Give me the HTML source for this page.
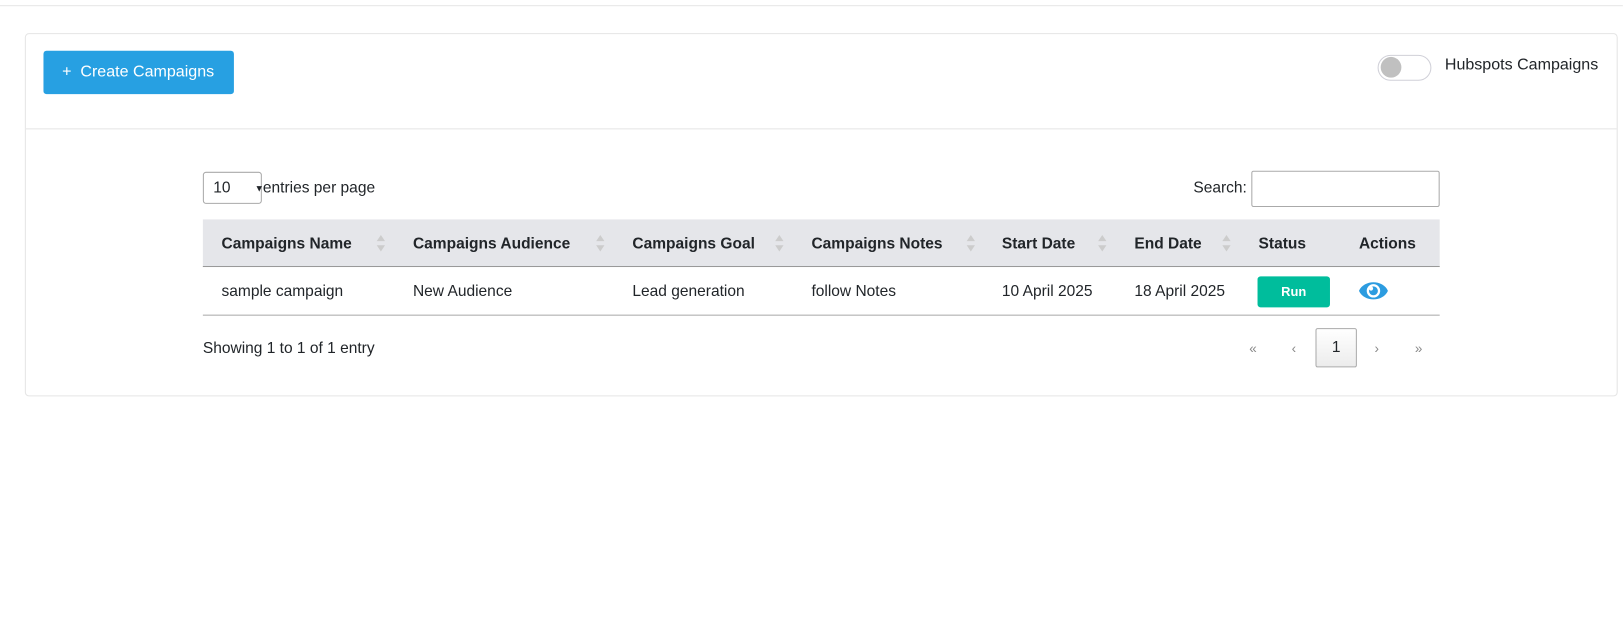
<!DOCTYPE html>
<html><head><style>
body{margin:0;width:1623px;height:622px;background:#fff;font-family:"Liberation Sans",sans-serif;font-size:15px;color:#212529;position:relative;overflow:hidden}
#w{position:absolute;left:0;top:0;width:1568px;height:601px;transform:scale(1.035);transform-origin:0 0}
.a{position:absolute;white-space:nowrap}
.sort{position:absolute;width:0;height:0;border-left:4px solid transparent;border-right:4px solid transparent}
</style></head><body><div id="w">
<div class="a" style="left:0;top:5px;width:1568px;height:1px;background:#e6e6e6"></div>
<div class="a" style="left:24px;top:32px;width:1539px;height:351px;border:1px solid #e5e5e5;border-radius:4px;box-sizing:border-box"></div>
<div class="a" style="left:25px;top:124px;width:1537px;height:1px;background:#e5e5e5"></div>
<div class="a" style="left:42px;top:49px;width:184px;height:42px;background:#27a0e2;border-radius:3px;color:#fff;font-size:15.5px;line-height:42px;text-indent:18px">+&nbsp;&nbsp;Create Campaigns</div>
<div class="a" style="left:1331px;top:53px;width:52px;height:25px;border:1px solid #d0d0d8;border-radius:13px;box-sizing:border-box"></div>
<div class="a" style="left:1334px;top:55px;width:20px;height:20px;border-radius:50%;background:#c0c0c0"></div>
<div class="a" style="left:1396px;top:54px;font-size:15.5px">Hubspots Campaigns</div>
<div class="a" style="left:196px;top:166px;width:57px;height:31px;border:1px solid #aaa;border-radius:3px;box-sizing:border-box;line-height:29px;text-indent:9px">10<span style="position:absolute;left:40px;top:1px;font-size:9px">&#9660;</span></div>
<div class="a" style="left:254px;top:173px">entries per page</div>
<div class="a" style="left:1153px;top:173px">Search:</div>
<div class="a" style="left:1209px;top:165px;width:182px;height:35px;border:1px solid #aaa;border-radius:2px;box-sizing:border-box"></div>
<div class="a" style="left:196px;top:212px;width:1195px;height:45px;background:#e5e6ea;border-bottom:1px solid #999"></div>
<div class="a" style="left:196px;top:304px;width:1195px;height:1px;background:#aaa"></div>
<div style="font-weight:bold">
<div class="a" style="left:214px;top:227px">Campaigns Name</div>
<div class="a" style="left:399px;top:227px">Campaigns Audience</div>
<div class="a" style="left:611px;top:227px">Campaigns Goal</div>
<div class="a" style="left:784px;top:227px">Campaigns Notes</div>
<div class="a" style="left:968px;top:227px">Start Date</div>
<div class="a" style="left:1096px;top:227px">End Date</div>
<div class="a" style="left:1216px;top:227px">Status</div>
<div class="a" style="left:1313px;top:227px">Actions</div>
</div>
<div class="sort" style="left:364px;top:227px;border-bottom:6px solid #ccc"></div><div class="sort" style="left:364px;top:237px;border-top:6px solid #ccc"></div>
<div class="sort" style="left:576px;top:227px;border-bottom:6px solid #ccc"></div><div class="sort" style="left:576px;top:237px;border-top:6px solid #ccc"></div>
<div class="sort" style="left:934px;top:227px;border-bottom:6px solid #ccc"></div><div class="sort" style="left:934px;top:237px;border-top:6px solid #ccc"></div>
<div class="sort" style="left:1061px;top:227px;border-bottom:6px solid #ccc"></div><div class="sort" style="left:1061px;top:237px;border-top:6px solid #ccc"></div>
<div class="sort" style="left:1181px;top:227px;border-bottom:6px solid #ccc"></div><div class="sort" style="left:1181px;top:237px;border-top:6px solid #ccc"></div>
<div class="sort" style="left:749px;top:227px;border-bottom:6px solid #ccc"></div><div class="sort" style="left:749px;top:237px;border-top:6px solid #ccc"></div>
<div class="a" style="left:214px;top:273px">sample campaign</div>
<div class="a" style="left:399px;top:273px">New Audience</div>
<div class="a" style="left:611px;top:273px">Lead generation</div>
<div class="a" style="left:784px;top:273px">follow Notes</div>
<div class="a" style="left:968px;top:273px">10 April 2025</div>
<div class="a" style="left:1096px;top:273px">18 April 2025</div>
<div class="a" style="left:1215px;top:267px;width:70px;height:30px;background:#00bd9c;border-radius:3px;color:#fff;font-size:12.5px;font-weight:bold;text-align:center;line-height:30px">Run</div>
<svg class="a" style="left:1312px;top:270px" width="30" height="22" viewBox="0 0 30 22"><path d="M1 11 C6 0 24 0 29 11 C24 22 6 22 1 11Z" fill="#2c9ce0"/><circle cx="15" cy="11" r="6.5" fill="#fff"/><circle cx="15" cy="11" r="4.3" fill="#2c9ce0"/><circle cx="12.7" cy="8.8" r="2" fill="#fff"/></svg>
<div class="a" style="left:196px;top:328px">Showing 1 to 1 of 1 entry</div>
<div class="a" style="left:1207px;top:329px;color:#888;font-size:13px">«</div>
<div class="a" style="left:1248px;top:329px;color:#888;font-size:13px">‹</div>
<div class="a" style="left:1271px;top:317px;width:40px;height:38px;border:1px solid #aaa;border-radius:2px;background:linear-gradient(#fff,#ececec);box-sizing:border-box;text-align:center;line-height:36px">1</div>
<div class="a" style="left:1328px;top:329px;color:#888;font-size:13px">›</div>
<div class="a" style="left:1367px;top:329px;color:#888;font-size:13px">»</div>
</div></body></html>
